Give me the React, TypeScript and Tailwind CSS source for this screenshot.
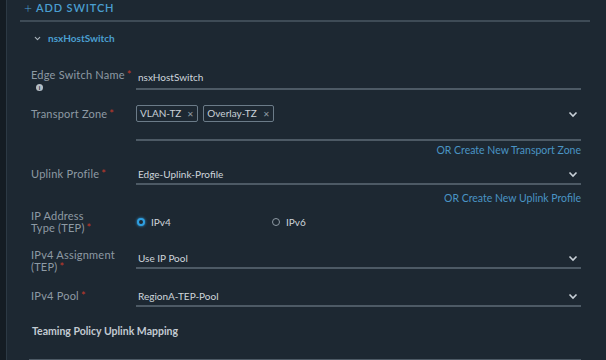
import { ChevronDown } from 'lucide-react';

const Req = () => <span className="text-[#c0392b] ml-[2px]">*</span>;

const Caret = () => (
  <svg width="10" height="7" viewBox="0 0 10 7" className="shrink-0">
    <path d="M1.5 1.5 L5 5 L8.5 1.5" fill="none" stroke="#c9d1d8" strokeWidth="1.6" />
  </svg>
);

const Tag = ({ label }: { label: string }) => (
  <div className="h-[17px] flex items-center gap-[6px] border border-[#6b7b88] rounded-[2px] px-[3px] text-[#c9d1d8]">
    <span>{label}</span>
    <span className="text-[#8c98a2] text-[8px]">✕</span>
  </div>
);

const SelectField = ({ value }: { value: string }) => (
  <div className="flex items-center h-[20px] border-b-2 border-[#4d5a65] pl-[2px] pr-[3px]">
    <span className="flex-1 text-[#cfd6dc]">{value}</span>
    <Caret />
  </div>
);

const label = 'w-[105px] shrink-0 text-[#8e9aa4] text-[11px] tracking-[0.02em]';

const App = () => {
  return (
    <div
      className="w-[606px] h-[360px] overflow-hidden flex bg-[#1d2832] text-[10px]"
      style={{ fontFamily: 'Lato, "Open Sans", sans-serif' }}
    >
      <div className="w-[7px] h-full bg-[#141c23] border-r border-[#2c3944]" />

      <div className="flex-1 pl-[13px] pr-[16px]">
        {/* add switch header */}
        <div className="h-[22px] flex items-start pt-[1px] border-b-2 border-[#3e4b56]">
          <span className="ml-[4px] text-[#4a9fd0] text-[11px] leading-[14px] tracking-[0.08em] font-semibold flex items-center gap-[3px]">
            <span className="text-[14px] font-light leading-none">+</span> ADD SWITCH
          </span>
        </div>

        <div className="pr-[9px]">
          {/* collapsible switch */}
          <div className="h-[16px] mt-[8px] flex items-center gap-[6px] pl-[13px]">
            <ChevronDown size={9} strokeWidth={3} className="text-[#aab4bc]" />
            <span className="text-[#4a9fd0] font-bold">nsxHostSwitch</span>
          </div>

          <div className="pl-[11px]">
            {/* edge switch name */}
            <div className="flex mt-[20px]">
              <div className={`${label} pt-[3px] leading-[12px]`}>
                <div>
                  Edge Switch Name<Req />
                </div>
                <div className="w-[7px] h-[7px] mt-[3px] ml-[5px] rounded-full bg-[#b5bec6] flex items-center justify-center text-[6px] font-bold text-[#1d2832] leading-none">
                  i
                </div>
              </div>
              <div className="flex-1 h-[24px] flex items-center pl-[2px] border-b-2 border-[#4d5a65] text-[#cfd6dc]">
                nsxHostSwitch
              </div>
            </div>

            {/* transport zone */}
            <div className="flex mt-[13px]">
              <div className={`${label} pt-[1px] leading-[17px]`}>
                Transport Zone<Req />
              </div>
              <div className="flex-1 h-[37px] border-b-2 border-[#4d5a65] pt-[1px] flex items-start">
                <div className="flex gap-[5px] flex-1">
                  <Tag label="VLAN-TZ" />
                  <Tag label="Overlay-TZ" />
                </div>
                <div className="pr-[3px] pt-[6px]">
                  <Caret />
                </div>
              </div>
            </div>
            <div className="text-right text-[#4a94c4] text-[10.5px] mt-[3px] leading-[12px]">
              OR Create New Transport Zone
            </div>

            {/* uplink profile */}
            <div className="flex mt-[9px] items-end">
              <div className={`${label} pb-[5px] leading-[12px]`}>
                Uplink Profile<Req />
              </div>
              <div className="flex-1">
                <SelectField value="Edge-Uplink-Profile" />
              </div>
            </div>
            <div className="text-right text-[#4a94c4] text-[10.5px] mt-[7px] leading-[12px]">
              OR Create New Uplink Profile
            </div>

            {/* ip address type */}
            <div className="flex mt-[6px] items-center">
              <div className={`${label} leading-[12px]`}>
                IP Address
                <br />
                Type (TEP)<Req />
              </div>
              <div className="flex-1 flex items-center text-[#cfd6dc]">
                <div className="w-[136px] flex items-center gap-[6px] pl-[1px]">
                  <span className="w-[8px] h-[8px] rounded-full bg-[#1d2832] border-[2.5px] border-[#2f9fe0] shadow-[0_0_3px_#2f9fe0]" />
                  IPv4
                </div>
                <div className="flex items-center gap-[6px]">
                  <span className="w-[8px] h-[8px] rounded-full border border-[#8e9aa4]" />
                  IPv6
                </div>
              </div>
            </div>

            {/* ipv4 assignment */}
            <div className="flex mt-[15px] items-start">
              <div className={`${label} leading-[12px]`}>
                IPv4 Assignment
                <br />
                (TEP)<Req />
              </div>
              <div className="flex-1">
                <SelectField value="Use IP Pool" />
              </div>
            </div>

            {/* ipv4 pool */}
            <div className="flex mt-[14px] items-end">
              <div className={`${label} pb-[5px] leading-[12px]`}>
                IPv4 Pool<Req />
              </div>
              <div className="flex-1">
                <SelectField value="RegionA-TEP-Pool" />
              </div>
            </div>

            {/* teaming */}
            <div className="mt-[18px] pl-[1px] text-[#c3cbd2] text-[10.5px] leading-[12px] font-bold">
              Teaming Policy Uplink Mapping
            </div>
            <div className="mt-[22px] -ml-[2px] h-[20px] border border-[#4d5a65]" />
          </div>
        </div>
      </div>
    </div>
  );
};

export default App;
